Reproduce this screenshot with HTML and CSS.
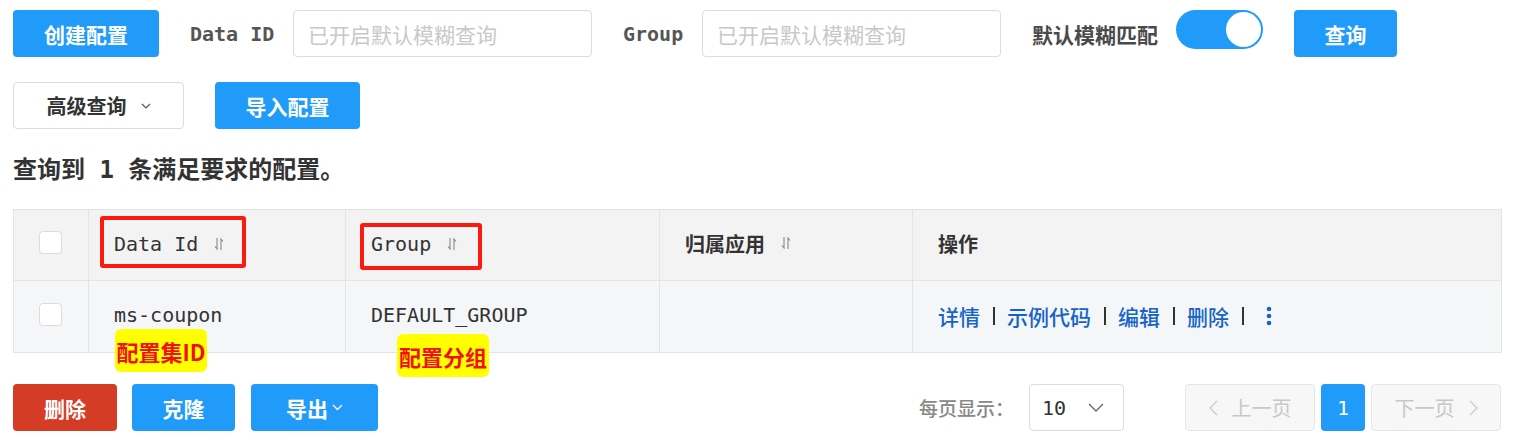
FILE: index.html
```html
<!DOCTYPE html>
<html lang="zh-CN">
<head>
<meta charset="utf-8">
<title>配置列表</title>
<link rel="stylesheet" href="styles.css">
</head>
<body>
<div class="page">
  <div class="toolbar">
    <button class="btn btn-primary btn-create">创建配置</button>
    <div class="form-item">
      <span class="label label-dataid">Data ID</span>
      <div class="input"><span class="placeholder">已开启默认模糊查询</span></div>
    </div>
    <div class="form-item">
      <span class="label label-group">Group</span>
      <div class="input"><span class="placeholder">已开启默认模糊查询</span></div>
    </div>
    <div class="form-item">
      <span class="label label-fuzzy">默认模糊匹配</span>
      <div class="switch"><span class="knob"></span></div>
    </div>
    <button class="btn btn-primary btn-query">查询</button>
  </div>

  <div class="toolbar toolbar-2">
    <button class="btn btn-default btn-advanced">高级查询<svg class="chev-small" width="10" height="6" viewBox="0 0 10 6"><path d="M1 1 L5 5 L9 1" fill="none" stroke="#555" stroke-width="1.2"/></svg></button>
    <button class="btn btn-primary btn-import">导入配置</button>
  </div>

  <h2 class="result">查询到 1 条满足要求的配置。</h2>

  <div class="table-wrap">
    <table class="table">
      <colgroup>
        <col class="c-check"><col class="c-id"><col class="c-group"><col class="c-app"><col class="c-ops">
      </colgroup>
      <thead>
        <tr>
          <th><span class="checkbox"></span></th>
          <th><span class="th-text">Data Id</span><svg class="sort" width="10" height="14" viewBox="0 0 10 14"><path d="M3 1 V12 L1 9.5 M7 13 V2 L9 4.5" fill="none" stroke="#888" stroke-width="1.1"/></svg></th>
          <th><span class="th-text">Group</span><svg class="sort" width="10" height="14" viewBox="0 0 10 14"><path d="M3 1 V12 L1 9.5 M7 13 V2 L9 4.5" fill="none" stroke="#888" stroke-width="1.1"/></svg></th>
          <th><span class="th-text th-cjk">归属应用</span><svg class="sort" width="10" height="14" viewBox="0 0 10 14"><path d="M3 1 V12 L1 9.5 M7 13 V2 L9 4.5" fill="none" stroke="#888" stroke-width="1.1"/></svg></th>
          <th><span class="th-text th-cjk">操作</span></th>
        </tr>
      </thead>
      <tbody>
        <tr>
          <td><span class="checkbox"></span></td>
          <td>ms-coupon</td>
          <td>DEFAULT_GROUP</td>
          <td></td>
          <td class="ops"><a class="link">详情</a><span class="sep"></span><a class="link">示例代码</a><span class="sep"></span><a class="link">编辑</a><span class="sep"></span><a class="link">删除</a><span class="sep"></span><svg class="more" width="6" height="20" viewBox="0 0 6 20"><circle cx="3" cy="3" r="2.3" fill="#1464c8"/><circle cx="3" cy="10" r="2.3" fill="#1464c8"/><circle cx="3" cy="17" r="2.3" fill="#1464c8"/></svg></td>
        </tr>
      </tbody>
    </table>
    <span class="mark mark-id"></span>
    <span class="mark mark-group"></span>
    <span class="note note-id">配置集ID</span>
    <span class="note note-group">配置分组</span>
  </div>

  <div class="footer">
    <div class="actions">
      <button class="btn btn-danger btn-del">删除</button>
      <button class="btn btn-primary btn-clone">克隆</button>
      <button class="btn btn-primary btn-export">导出<svg class="chev-small" width="11" height="7" viewBox="0 0 11 7"><path d="M1 1 L5.5 5.5 L10 1" fill="none" stroke="#fff" stroke-width="1.3"/></svg></button>
    </div>
    <div class="pager">
      <span class="page-label">每页显示：</span>
      <div class="select"><span class="select-val">10</span><svg width="16" height="9" viewBox="0 0 16 9"><path d="M1 1 L8 8 L15 1" fill="none" stroke="#666" stroke-width="1.3"/></svg></div>
      <div class="pages">
        <button class="pbtn pbtn-disabled"><svg width="9" height="16" viewBox="0 0 9 16"><path d="M8 1 L1 8 L8 15" fill="none" stroke="#ccc" stroke-width="1.4"/></svg><span>上一页</span></button>
        <button class="pbtn pbtn-current">1</button>
        <button class="pbtn pbtn-disabled"><span>下一页</span><svg width="9" height="16" viewBox="0 0 9 16"><path d="M1 1 L8 8 L1 15" fill="none" stroke="#ccc" stroke-width="1.4"/></svg></button>
      </div>
    </div>
  </div>
</div>
</body>
</html>
```

FILE: styles.css
```css
* { box-sizing: border-box; }
html, body { margin: 0; padding: 0; background: #fff; }
body {
  font-family: "DejaVu Sans Mono", "Noto Sans CJK SC", monospace;
  font-size: 20px;
  color: #333;
}
.page { padding: 10px 13px 0 13px; width: 1514px; }

.toolbar { display: flex; align-items: center; gap: 31px; height: 47px; }
.toolbar-2 { margin-top: 25px; }

.btn {
  height: 47px;
  border: 0;
  border-radius: 4px;
  font-family: "Noto Sans CJK SC", sans-serif;
  font-size: 21px;
  font-weight: bold;
  display: inline-flex;
  align-items: center;
  justify-content: center;
  padding: 0;
  cursor: pointer;
}
.btn-primary { background: #209bfa; color: #fff; }
.btn-danger { background: #d43c25; color: #fff; }
.btn-default { background: #fff; color: #333; border: 1px solid #dcdcdc; font-size: 20px; }
.btn-create { width: 146px; }
.btn-query { width: 103px; }
.btn-advanced { width: 171px; gap: 14px; padding-left: 0; }
.btn-import { width: 145px; }

.form-item { display: flex; align-items: center; gap: 18px; }
.label { color: #555; font-weight: bold; }
.label-dataid { width: 85px; }
.label-group { width: 61px; }
.label-fuzzy { font-family: "Noto Sans CJK SC", sans-serif; font-size: 21px; width: 126px; color: #4a4a4a; }

.input {
  width: 299px;
  height: 47px;
  border: 1px solid #dcdcdc;
  border-radius: 4px;
  display: flex;
  align-items: center;
  padding-left: 14px;
}
.placeholder { font-family: "Noto Sans CJK SC", sans-serif; font-size: 21px; color: #c8c8c8; }

.switch {
  width: 87px;
  height: 39px;
  margin-top: -8px;
  border-radius: 20px;
  background: #209bfa;
  display: flex;
  align-items: center;
  justify-content: flex-end;
  padding-right: 2px;
}
.knob { width: 35px; height: 35px; border-radius: 50%; background: #fff; display: block; }

.result {
  margin: 25px 0 0 0;
  height: 32px;
  line-height: 32px;
  font-size: 24px;
  font-weight: bold;
  color: #333;
}

.table-wrap { position: relative; margin-top: 23px; }
.table {
  width: 1488px;
  border-collapse: collapse;
  table-layout: fixed;
}
.c-check { width: 75px; }
.c-id { width: 257px; }
.c-group { width: 314px; }
.c-app { width: 253px; }
.c-ops { width: 589px; }

.table th, .table td {
  border: 1px solid #e4e4e4;
  padding: 0 0 4px 25px;
  text-align: left;
  vertical-align: middle;
}
.table th { height: 71px; background: #f3f3f4; font-weight: normal; color: #333; }
.table td { height: 72px; background: #f5f6f8; color: #333; }
.th-text { vertical-align: middle; }
.th-cjk { font-family: "Noto Sans CJK SC", sans-serif; font-weight: bold; font-size: 20px; }
.sort { vertical-align: middle; margin-left: 16px; }

.checkbox {
  display: inline-block;
  width: 23px;
  height: 23px;
  border: 1px solid #dcdcdc;
  border-radius: 4px;
  background: #fff;
  vertical-align: middle;
  margin-top: -4px;
}

.ops { font-family: "Noto Sans CJK SC", sans-serif; font-size: 21px; }
.ops > * { vertical-align: middle; }
.link { color: #1464c8; font-weight: 500; text-decoration: none; }
.sep { display: inline-block; width: 2px; height: 18px; background: #333; margin: 0 12px 0 13px; }
.more { margin-left: 10px; }

.mark {
  position: absolute;
  border: 4px solid #fa1a10;
  border-radius: 3px;
}
.mark-id { left: 87px; top: 7px; width: 146px; height: 52px; }
.mark-group { left: 347px; top: 14px; width: 122px; height: 47px; }

.note {
  position: absolute;
  background: #ffff00;
  color: #f01010;
  font-family: "Noto Sans CJK SC", sans-serif;
  font-weight: bold;
  font-size: 22px;
  border-radius: 6px;
  height: 43px;
  width: 92px;
  display: flex;
  align-items: center;
  justify-content: center;
}
.note-id { left: 102px; top: 120px; }
.note-group { left: 384px; top: 125px; }

.footer {
  margin-top: 31px;
  display: flex;
  justify-content: space-between;
  align-items: center;
  height: 47px;
}
.actions { display: flex; gap: 15px; }
.actions .btn-export { margin-left: 1px; }
.btn-del { width: 104px; }
.btn-clone { width: 103px; }
.btn-export { width: 127px; gap: 4px; }

.pager { display: flex; align-items: center; }
.page-label { font-family: "Noto Sans CJK SC", sans-serif; font-size: 19px; color: #888; font-weight: 500; width: 110px; }
.select {
  width: 95px;
  height: 47px;
  border: 1px solid #dcdcdc;
  border-radius: 4px;
  display: flex;
  align-items: center;
  justify-content: space-between;
  padding: 0 19px 0 12px;
}
.select-val { color: #333; }
.pages { display: flex; gap: 6px; margin-left: 61px; }
.pbtn {
  height: 47px;
  border-radius: 4px;
  font-family: "Noto Sans CJK SC", sans-serif;
  font-size: 20px;
  display: flex;
  align-items: center;
  justify-content: center;
  gap: 14px;
  padding: 0;
}
.pbtn-disabled { width: 130px; background: #f7f7f7; border: 1px solid #e6e6e6; color: #c8c8c8; }
.pbtn-current { width: 44px; background: #209bfa; border: 0; color: #fff; font-family: "DejaVu Sans Mono", monospace; }
```
